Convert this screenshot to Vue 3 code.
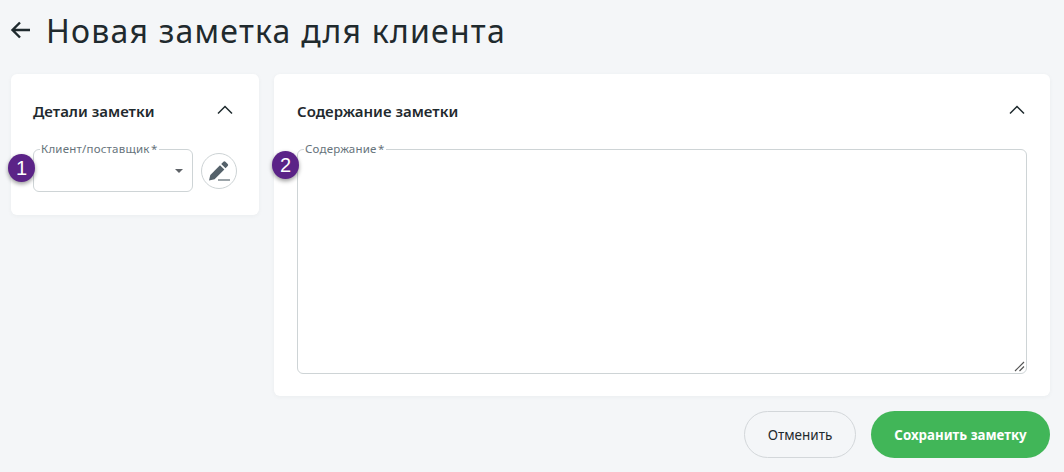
<script setup>
</script>

<template>
  <div class="page">
    <header class="head">
      <svg class="back" width="24" height="24" viewBox="0 0 24 24"><path d="M21 12H3.500M11 4.500L3.500 12l7.500 7.500" fill="none" stroke="#1f2a2e" stroke-width="2.400"/></svg>
      <h1>Новая заметка для клиента</h1>
    </header>
    <div class="cols">
      <section class="card left">
        <div class="card-head">
          <h2>Детали заметки</h2>
          <svg width="16" height="10" viewBox="0 0 16 10"><path d="M1 8.500L8 1.500l7 7" fill="none" stroke="#1f2a2e" stroke-width="1.500"/></svg>
        </div>
        <div class="row">
          <fieldset class="field select">
            <legend>Клиент/поставщик<span class="star">*</span></legend>
            <span class="caret"></span>
          </fieldset>
          <button class="edit" type="button" aria-label="edit">
            <svg width="24" height="24" viewBox="0 0 24 24"><path d="M2 21.500l1.300-5.600L13 6.200l4.300 4.300-9.700 9.700z" fill="#54616a"/><path d="M14.200 5l2.200-2.200q1-1 2 0l2.300 2.300q1 1 0 2l-2.200 2.200z" fill="#54616a"/><path d="M11 21h12" stroke="#7b868c" stroke-width="1.500"/></svg>
          </button>
          <span class="badge b1">1</span>
        </div>
      </section>
      <div class="right-col">
        <section class="card right">
          <div class="card-head">
            <h2>Содержание заметки</h2>
            <svg width="16" height="10" viewBox="0 0 16 10"><path d="M1 8.500L8 1.500l7 7" fill="none" stroke="#1f2a2e" stroke-width="1.500"/></svg>
          </div>
          <div class="area-wrap">
            <fieldset class="field area">
              <legend>Содержание<span class="star">*</span></legend>
              <svg class="grip" width="11" height="11" viewBox="0 0 11 11"><path d="M1 10L10 1M5.500 10L10 5.500" stroke="#555" stroke-width="1.200"/></svg>
            </fieldset>
            <span class="badge b2">2</span>
          </div>
        </section>
        <div class="actions">
          <button class="btn cancel" type="button">Отменить</button>
          <button class="btn save" type="button">Сохранить заметку</button>
        </div>
      </div>
    </div>
  </div>
</template>

<style>
html, body { margin: 0; background: #f4f6f8; }
</style>

<style scoped>
.page {
  width: 1064px;
  height: 472px;
  box-sizing: border-box;
  padding: 11px 14px 0 11px;
  background: #f4f6f8;
  font-family: "Noto Sans", sans-serif;
  color: #1f2a2e;
  overflow: hidden;
}
.head { display: flex; align-items: center; height: 40px; margin-left: -2px; }
.back { margin-right: 13px; margin-top: -3px; }
h1 { margin: 0; font-size: 32px; font-weight: 400; letter-spacing: 1.220px; line-height: 40px; }
.cols { display: flex; gap: 15px; margin-top: 23px; align-items: flex-start; }
.card {
  background: #fff;
  border-radius: 6px;
  box-shadow: 0 1px 4px rgba(60, 70, 80, 0.05);
  box-sizing: border-box;
}
.left { width: 248px; height: 141px; padding: 0 22px; }
.right-col { width: 776px; }
.right { height: 322px; padding: 0 23px; }
.card-head { display: flex; justify-content: space-between; align-items: center; height: 70px; padding-top: 5px; box-sizing: border-box; }
.card-head h2 { margin-top: -2px; }
.card-head svg { margin-top: -4px; }
.left .card-head svg { margin-right: 4px; }
.right .card-head svg { margin-right: 2px; }
h2 { margin: 0; font-size: 15px; font-weight: 600; line-height: 20px; }
.row { position: relative; display: flex; align-items: flex-start; gap: 8px; }
.field {
  margin: 0;
  box-sizing: border-box;
  border: 1px solid #ced4d6;
  border-radius: 6px;
  padding: 0 0 0 6px;
  min-width: 0;
  position: relative;
}
.field legend {
  padding: 0 1px;
  margin: 0;
  font-size: 11.500px;
  line-height: 14px;
  color: #66737b;
  letter-spacing: 0.2px;
}
.star { margin-left: 1.500px; }
.select { width: 160px; height: 50px; margin-top: -2px; }
.caret {
  position: absolute;
  right: 9px;
  top: 13px;
  width: 0;
  height: 0;
  border: 4px solid transparent;
  border-top: 4px solid #5f6368;
  border-bottom: 0;
}
.edit {
  width: 36px;
  height: 36px;
  margin-top: 9px;
  border: 1px solid #cdd3d5;
  border-radius: 50%;
  background: #fff;
  padding: 0;
  display: flex;
  align-items: center;
  justify-content: center;
}
.area-wrap { position: relative; }
.area { width: 730px; height: 232px; margin-top: -2px; }
.grip { position: absolute; right: 1px; bottom: 1px; }
.badge {
  position: absolute;
  width: 27px;
  height: 28px;
  border-radius: 50%;
  background: #5b2387;
  color: #fff;
  font-size: 20px;
  line-height: 28px;
  text-align: center;
  font-family: "Liberation Sans", sans-serif;
  box-shadow: 0 2px 4px rgba(0, 0, 0, 0.4);
}
.b1 { left: -25px; top: 10px; }
.b2 { left: -25px; top: 9px; }
.actions { display: flex; justify-content: flex-end; gap: 15px; margin-top: 15px; }
.btn {
  height: 47px;
  border-radius: 24px;
  font-family: "Noto Sans", sans-serif;
  font-size: 13.500px;
  padding: 0;
}
.cancel { width: 112px; background: transparent; border: 1px solid #d3d7da; color: #1f2a2e; }
.save { width: 179px; background: #41b658; border: 0; color: #fff; font-weight: 700; font-size: 13.300px; }
</style>
